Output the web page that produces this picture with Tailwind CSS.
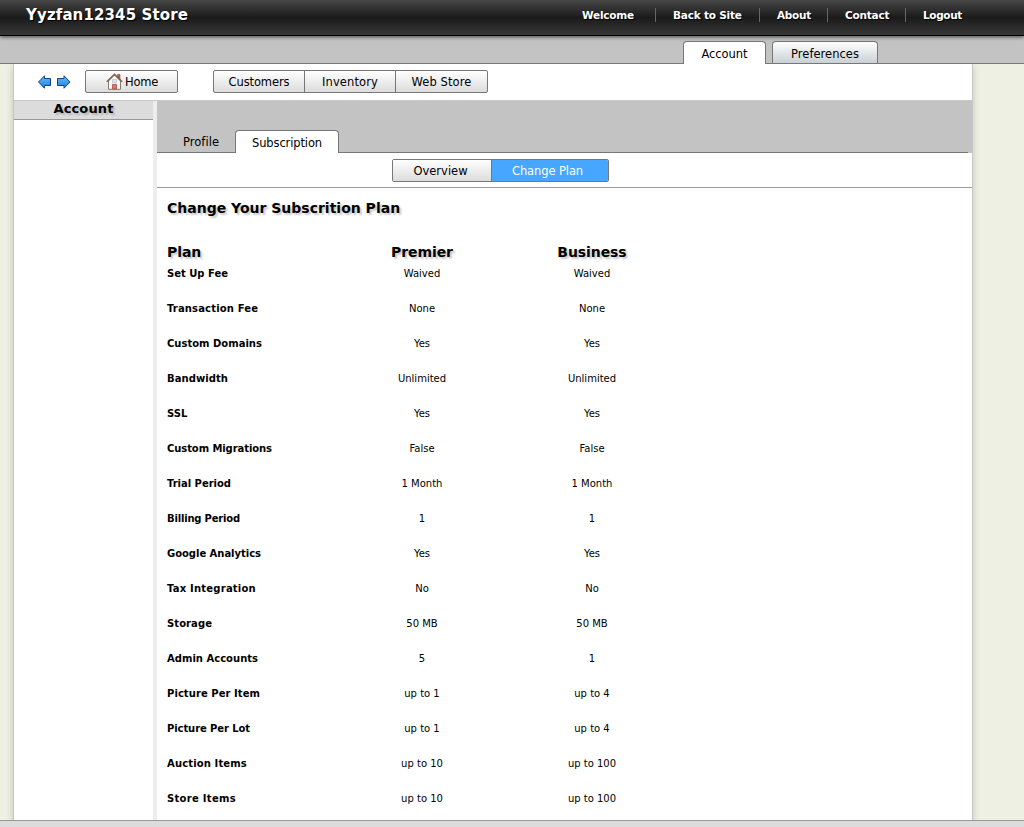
<!DOCTYPE html>
<html lang="en">
<head>
<meta charset="utf-8">
<title>Yyzfan12345 Store</title>
<script src="https://cdn.jsdelivr.net/npm/@tailwindcss/browser@4"></script>
</head>
<body class="h-[827px] overflow-hidden bg-[#edf0e2] text-black font-['Verdana','DejaVu_Sans',sans-serif] text-[11.5px] leading-[16px] whitespace-nowrap flex flex-col">
<header class="relative z-10 h-9 shrink-0 flex justify-between border-b border-black bg-linear-to-b from-[#484848] via-[#1b1b1b] to-[#373737] text-white shadow-[0_1px_4px_rgba(0,0,0,0.65)]">
  <h1 class="pl-[26px] pt-[5px] h-[26px] text-[15px] leading-[20px] font-bold tracking-[0.12px] text-shadow-[1px_1px_1px_#000]">Yyzfan12345 Store</h1>
  <nav class="flex pt-[7px] text-[10.5px] font-bold tracking-[-0.2px] text-shadow-[1px_1px_1px_#000]">
    <div class="w-[94px] pl-[21px] h-[16px]">Welcome</div>
    <div class="w-[104px] pl-[17px] h-[14px] mt-px border-l border-[#666] leading-[14px]">Back to Site</div>
    <div class="w-[68px] pl-[17px] h-[14px] mt-px border-l border-[#666] leading-[14px] tracking-[-0.3px]">About</div>
    <div class="w-[78px] pl-[17px] h-[14px] mt-px border-l border-[#666] leading-[14px]">Contact</div>
    <div class="w-[119px] pl-[17px] h-[14px] mt-px border-l border-[#666] leading-[14px] tracking-[-0.35px]">Logout</div>
  </nav>
</header>
<div class="relative h-[28px] shrink-0 bg-[#c3c3c3] border-b border-[#777] flex justify-end items-start pt-[5px] pr-[146px] gap-[6px]">
  <div class="w-[83px] h-[23px] bg-white border border-b-0 border-[#777] rounded-t-[4px] flex justify-center pt-[4px] tracking-[-0.06px]">Account</div>
  <div class="w-[106px] h-[22px] bg-linear-to-b from-[#fff] to-[#c9d0d4] border border-b-0 border-[#777] rounded-t-[4px] flex justify-center pt-[4px] tracking-[0.03px]">Preferences</div>
</div>
<main class="ml-[13px] w-[960px] h-[756px] bg-white border-x border-[#c6c6c6] flex flex-col shadow-[0_3px_7px_rgba(0,0,0,0.18)]">
  <div class="h-[37px] shrink-0 border-b border-[#c9c9c9] flex pt-[6px] pl-[24px]">
    <svg class="mt-[5px] shrink-0" width="33" height="15" viewBox="0 0 33 15">
      <defs><linearGradient id="b" x1="0" y1="0" x2="0" y2="1"><stop offset="0" stop-color="#6bbcf5"/><stop offset="1" stop-color="#1683dc"/></linearGradient></defs>
      <path d="M.5 7 6.500 .8v2.700h6v7h-6v2.700z" fill="url(#b)" stroke="#11408b"/>
      <path d="M32 7 26 .8v2.700h-6.500v7H26v2.700z" fill="url(#b)" stroke="#11408b"/>
    </svg>
    <button class="ml-[14px] w-[93px] h-[23px] rounded-[2px] border border-[#777] bg-linear-to-b from-white to-[#dcdcdc] flex pl-[20px]">
      <svg class="mt-[2px] shrink-0" width="17" height="17" viewBox="0 0 17 17">
        <path d="M11.500 1.500h2.500v6h-2.500z" fill="#c6584e" stroke="#8d5148" stroke-width=".6"/>
        <path d="M2.500 8v8.300h12V8l-6-6z" fill="#f8f8f6" stroke="#85776e"/>
        <path d="M.8 8.800 8.500 1.200l7.700 7.600" fill="none" stroke="#82624f" stroke-width="1.500"/>
        <path d="M6.500 6.500h4v3.500h-4z" fill="#dce3ea" stroke="#b9c0c6" stroke-width=".7"/>
        <path d="M6.500 11.500h4v4.500h-4z" fill="#d9776c" stroke="#b14b42" stroke-width=".8"/>
      </svg>
      <span class="ml-[2px] mt-[3px] tracking-[-0.24px]">Home</span>
    </button>
    <div class="ml-[35px] w-[275px] h-[23px] rounded-[2px] border border-[#777] bg-linear-to-b from-white to-[#dcdcdc] flex leading-[21px] overflow-hidden">
      <div class="w-[91px] border-r border-[#777] flex justify-center pt-px tracking-[-0.1px]">Customers</div>
      <div class="w-[91px] border-r border-[#777] flex justify-center pt-px tracking-[0.11px]">Inventory</div>
      <div class="w-[91px] flex justify-center pt-px tracking-[0.1px]">Web Store</div>
    </div>
  </div>
  <div class="flex grow">
    <aside class="w-[139px]">
      <h2 class="h-[19px] bg-[#dcdcdc] border-b border-[#999] text-[13px] leading-[16px] font-bold tracking-[0.12px] flex justify-center text-shadow-[2px_2px_2px_rgba(0,0,0,0.2)]">Account</h2>
    </aside>
    <div class="w-[4px] bg-[#ededed]"></div>
    <section class="w-[815px]">
      <div class="h-[52px] bg-[#c3c3c3] flex items-end">
        <div class="w-[78px] h-[23px] border-b border-[#777] pl-[26px] pt-[4px] tracking-[0.04px]">Profile</div>
        <div class="w-[104px] h-[23px] bg-white border border-b-0 border-[#777] rounded-t-[4px] flex justify-center pt-[4px] tracking-[-0.12px]">Subscription</div>
        <div class="w-[629px] h-[23px] border-b border-[#777]"></div>
      </div>
      <div class="h-[35px] border-b border-[#999] pt-[6px] pl-[235px]">
        <div class="w-[217px] h-[23px] rounded-[2px] border border-[#777] flex leading-[21px] overflow-hidden">
          <div class="w-[99px] border-r border-[#777] bg-linear-to-b from-white to-[#dcdcdc] flex justify-center pt-px pr-[3px] tracking-[-0.01px]">Overview</div>
          <div class="w-[116px] bg-[#47a6ff] text-white flex justify-center pt-px pr-[5px] tracking-[-0.1px]">Change Plan</div>
        </div>
      </div>
      <div class="pl-[10px] pt-[10px]">
        <h2 class="text-[14px] leading-[20px] h-[44px] font-bold text-shadow-[2px_2px_2px_rgba(0,0,0,0.22)]">Change Your Subscrition Plan</h2>
        <div class="grid grid-cols-[170px_170px_170px] text-[14px] leading-[20px] h-[20px] font-bold text-center tracking-[-0.08px] text-shadow-[2px_2px_2px_rgba(0,0,0,0.22)]">
          <div class="text-left">Plan</div><div>Premier</div><div>Business</div>
        </div>
        <div id="plans" class="text-[10px] leading-[22px] pt-px"></div>
      </div>
    </section>
  </div>
</main>
<footer class="absolute top-[820px] inset-x-0 h-[7px] bg-[#dcdcdc] border-t border-[#999]"></footer>
<script>
// Each entry: feature, width of its label, Premier value, Business value.
const rows = [
  ['Set Up Fee',61,'Waived','Waived'],
  ['Transaction Fee',91,'None','None'],
  ['Custom Domains',95,'Yes','Yes'],
  ['Bandwidth',61,'Unlimited','Unlimited'],
  ['SSL',20.500,'Yes','Yes'],
  ['Custom Migrations',105,'False','False'],
  ['Trial Period',64,'1 Month','1 Month'],
  ['Billing Period',73,'1','1'],
  ['Google Analytics',94,'Yes','Yes'],
  ['Tax Integration',89,'No','No'],
  ['Storage',45,'50 MB','50 MB'],
  ['Admin Accounts',91,'5','1'],
  ['Picture Per Item',93,'up to 1','up to 4'],
  ['Picture Per Lot',83,'up to 1','up to 4'],
  ['Auction Items',80,'up to 10','up to 100'],
  ['Store Items',69,'up to 10','up to 100']
];
const ctx = document.createElement('canvas').getContext('2d');
ctx.font = 'bold 10px "DejaVu Sans"';
const track = (t, w) => ((w - ctx.measureText(t).width) / t.length).toFixed(2);
document.getElementById('plans').innerHTML = rows.map(([n, w, a, b]) =>
  `<div class="grid grid-cols-[170px_170px_170px] h-[35px] text-center">
    <div class="text-left font-bold" style="letter-spacing:${track(n, w)}px">${n}</div>
    <div>${a}</div><div>${b}</div>
  </div>`).join('');
</script>
</body>
</html>
